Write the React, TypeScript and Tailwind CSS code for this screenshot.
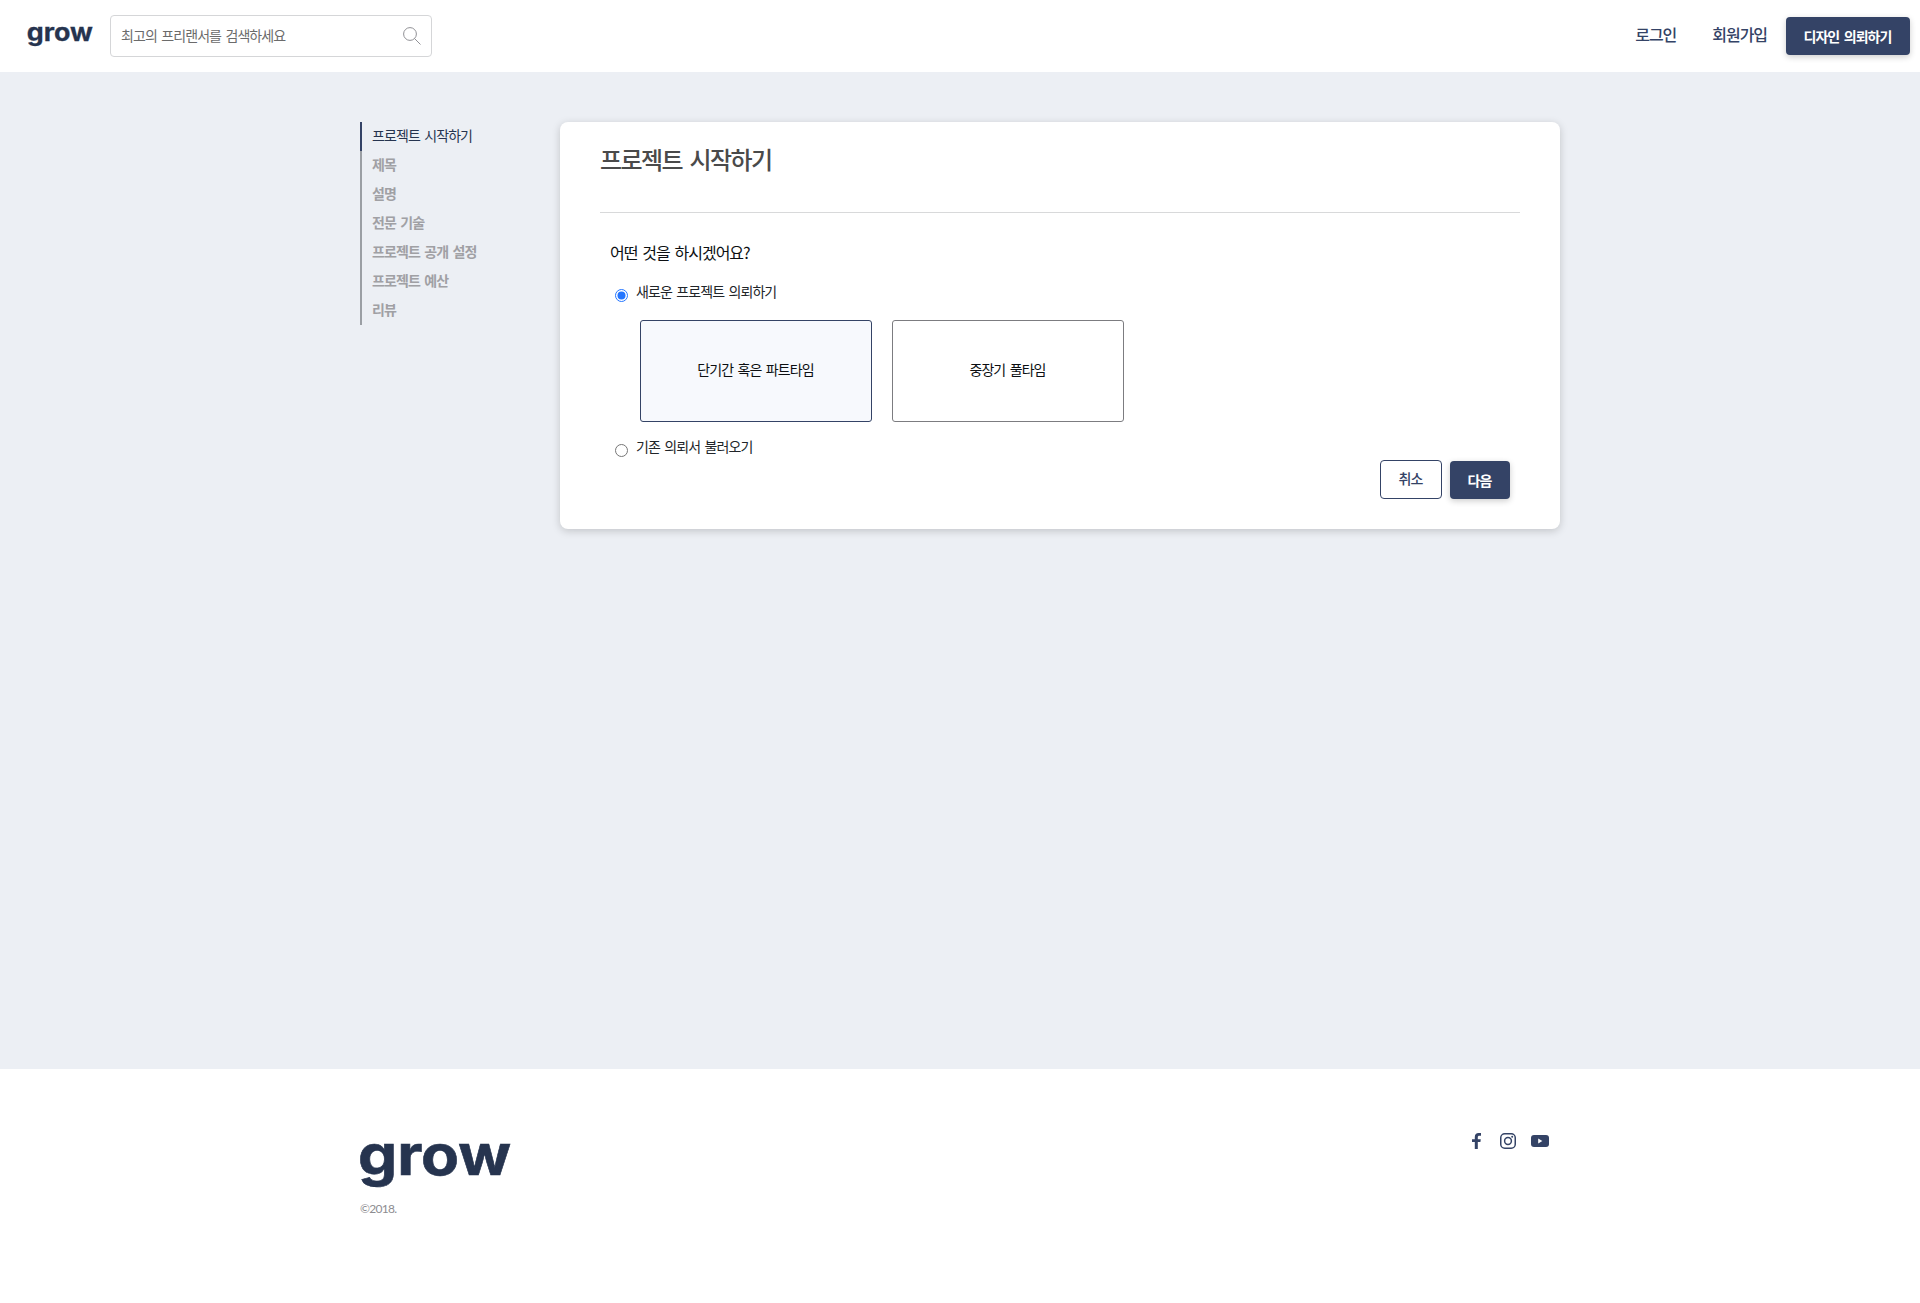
import type { ReactNode } from 'react';

const steps = ['제목', '설명', '전문 기술', '프로젝트 공개 설정', '프로젝트 예산', '리뷰'];

function Logo({ className }: { className: string }) {
  return (
    <svg viewBox="0 0 150 44" className={className} role="img" aria-label="grow">
      <text
        x="-2"
        y="32"
        textLength="153"
        lengthAdjust="spacingAndGlyphs"
        fontSize="56"
        fontWeight="700"
        fill="#26344f"
        stroke="#26344f"
        strokeWidth=".6"
        className="tracking-normal!"
        fontFamily="Inter, sans-serif"
      >
        grow
      </text>
    </svg>
  );
}

function PrimaryButton({ children, className }: { children: ReactNode; className: string }) {
  return (
    <button
      className={`h-[38px] rounded bg-[#344366] pr-[2px] pl-px text-sm font-bold text-white shadow-[0_2px_6px_rgba(0,0,0,0.2)] ${className}`}
    >
      {children}
    </button>
  );
}

function Radio({ checked }: { checked?: boolean }) {
  return (
    <svg viewBox="0 0 13 13" className="mt-[7px] size-[13px] shrink-0">
      <circle cx="6.5" cy="6.5" r="6" fill="#fff" stroke={checked ? '#2375ff' : '#767676'} />
      {checked && <circle cx="6.5" cy="6.5" r="4" fill="#2375ff" />}
    </svg>
  );
}

export default function App() {
  return (
    <div className="flex h-[1303px] w-[1920px] flex-col overflow-hidden bg-white font-['Noto_Sans_CJK_KR',sans-serif] text-sm text-[#212529] [&_*]:tracking-[-0.065em] [&_*]:[word-spacing:0.15em]">
      <header className="flex h-[72px] shrink-0 items-start pr-[10px] pl-[27px]">
        <Logo className="mt-[27px] h-[19px] w-[66px] overflow-visible" />
        <div className="mt-[15px] ml-[17px] flex h-[42px] w-[322px] items-center justify-between rounded border border-[#d5d6d8] pr-[10px] pl-[10px] text-[#6b6b6b]">
          <span className="pb-[2px]">최고의 프리랜서를 검색하세요</span>
          <svg viewBox="0 0 18 18" className="mb-px size-[18px]" fill="none" stroke="#85858a" strokeWidth=".9">
            <circle cx="7" cy="7" r="6.4" />
            <path d="M11.5 11.5 17.5 17.5" />
          </svg>
        </div>
        <nav className="mt-[22px] ml-auto flex gap-[36px] text-base leading-6 font-medium text-[#344366]">
          <a>로그인</a>
          <a>회원가입</a>
        </nav>
        <PrimaryButton className="mt-[17px] ml-[19px] w-[124px]">디자인 의뢰하기</PrimaryButton>
      </header>

      <main className="flex h-[997px] shrink-0 items-start bg-[#eceff4] pt-[50px] pl-[360px]">
        <ul className="w-[200px] leading-[26px] font-bold text-[#a0a0a4]">
          <li className="h-[29px] border-l-2 border-[#344366] pl-[10px] font-normal text-[#26344f]">프로젝트 시작하기</li>
          {steps.map((s) => (
            <li key={s} className="h-[29px] border-l-2 border-[#9b9fa4] pl-[10px]">
              {s}
            </li>
          ))}
        </ul>
        <section className="flex h-[407px] w-[1000px] flex-col rounded-lg bg-white px-10 shadow-[0_2px_8px_rgba(0,0,0,0.18)]">
          <h1 className="h-[91px] border-b border-[#d8d9da] pt-[19px] text-2xl leading-9 font-medium text-[#4a4a4a]">
            프로젝트 시작하기
          </h1>
          <h2 className="mt-[27px] ml-[10px] text-base leading-6 text-[#0c0f12]">어떤 것을 하시겠어요?</h2>
          <div className="mt-[18px] ml-[15px] flex h-[21px] gap-2 leading-[18px]">
            <Radio checked />
            <span>새로운 프로젝트 의뢰하기</span>
          </div>
          <div className="mt-[17px] ml-10 flex gap-5 text-[#0c0f12]">
            <div className="flex h-[102px] w-[232px] items-center justify-center rounded-[3px] border border-[#344366] bg-[#f7f9fd] pr-px pb-[4px]">
              단기간 혹은 파트타임
            </div>
            <div className="flex h-[102px] w-[232px] items-center justify-center rounded-[3px] border border-[#7c7c80] pr-px pb-[4px]">
              중장기 풀타임
            </div>
          </div>
          <div className="mt-[15px] ml-[15px] flex h-[21px] gap-2 leading-[18px]">
            <Radio />
            <span>기존 의뢰서 불러오기</span>
          </div>
          <div className="mt-[2px] mr-[10px] flex justify-end gap-2">
            <button className="h-[39px] w-[62px] rounded border border-[#344366] pr-px pb-[4px] font-medium text-[#344366]">취소</button>
            <PrimaryButton className="mt-px w-[60px]">다음</PrimaryButton>
          </div>
        </section>
      </main>

      <footer className="flex justify-between pt-[74px] pr-[371px] pl-[360px]">
        <div>
          <Logo className="h-[44px] w-[150px] overflow-visible" />
          <p className="mt-[13px] font-[Lato] text-xs leading-[18px] tracking-[-0.06em]! text-[#8d8d91]">©2018.</p>
        </div>
        <div className="-mt-[10px] flex h-4 items-center text-[#344366]">
          <svg viewBox="0 0 9 16" className="mr-[19px] h-4 w-[9px]" fill="currentColor">
            <path d="M2.8 16V9H0V6.2h2.8V4C2.8 1.4 4.3 0 6.6 0H9v2.7H7.4C6.3 2.7 5.8 3.2 5.8 4.2v2h3L8.4 9H5.8v7z" />
          </svg>
          <svg viewBox="0 0 16 16" className="mr-[15px] size-4" fill="none" stroke="currentColor" strokeWidth="1.5">
            <rect x=".75" y=".75" width="14.5" height="14.5" rx="4" />
            <circle cx="8" cy="8" r="3.4" />
            <circle cx="12.2" cy="3.8" r="1" fill="currentColor" stroke="none" />
          </svg>
          <svg viewBox="0 0 18 12" className="h-3 w-[18px]">
            <rect width="18" height="12" rx="3" fill="currentColor" />
            <path d="M7.2 3.6v4.8L11.4 6z" fill="#fff" />
          </svg>
        </div>
      </footer>
    </div>
  );
}
